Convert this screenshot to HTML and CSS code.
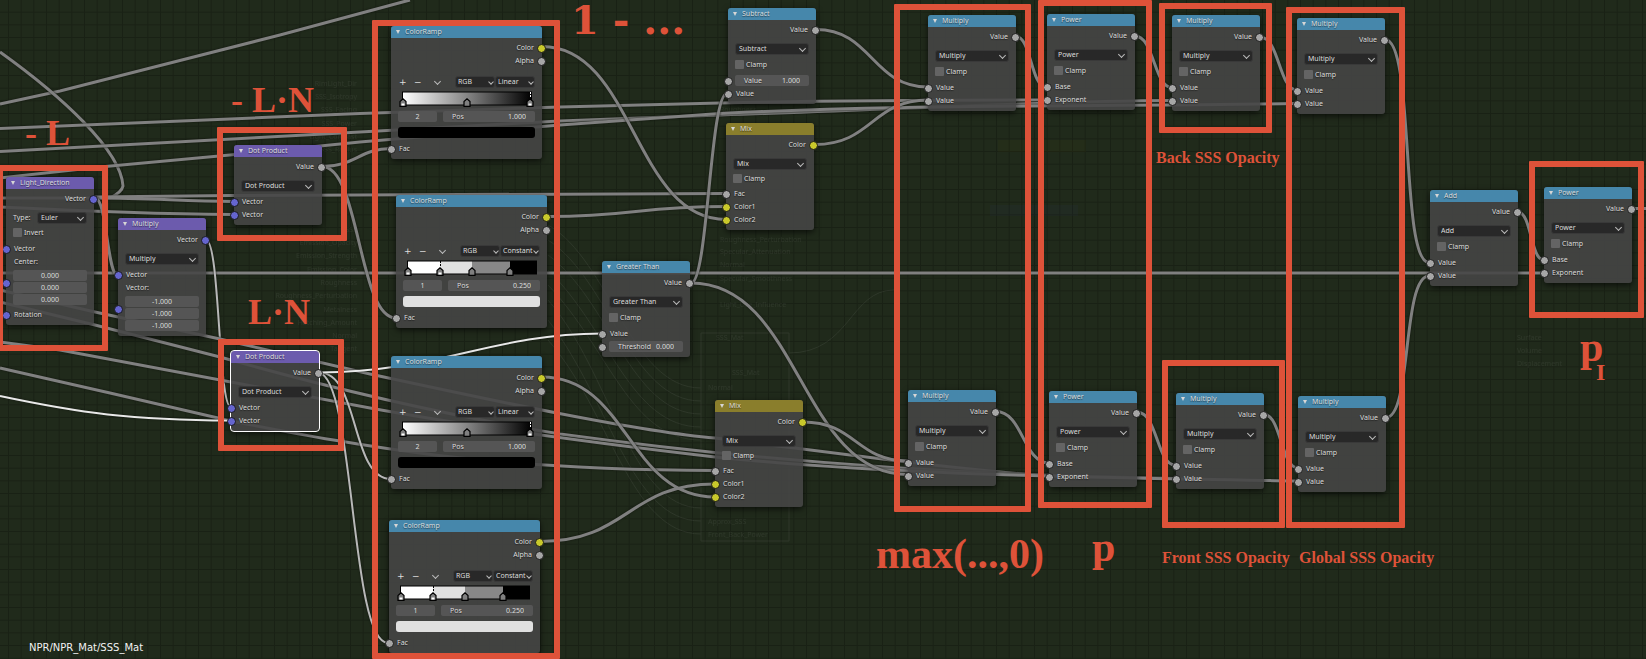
FILE: index.html
```html
<!DOCTYPE html>
<html lang="en">
<head>
<meta charset="utf-8">
<title>NPR/NPR_Mat/SSS_Mat</title>
<link rel="stylesheet" href="styles.css">
</head>
<body>
<main class="canvas">
<svg class="wires" aria-hidden="true">
  <defs>
    <pattern id="grid" x="8" y="11.7" width="12.667" height="12.667" patternUnits="userSpaceOnUse"><path d="M.5 0V13M0 .5H13" class="gridline"/></pattern>
    <linearGradient id="fade"><stop offset="0" stop-color="#fff"/><stop offset=".5" stop-color="#858585"/><stop offset="1" stop-color="#000"/></linearGradient>
    <symbol id="pin" viewBox="0 0 8 9"><path d="M1 8.3V3.6L4 .8 7 3.6V8.3Z" fill="#808080" stroke="#000" stroke-width="1.2"/></symbol>
    <symbol id="pinlight" viewBox="0 0 8 9"><path d="M1 8.3V3.6L4 .8 7 3.6V8.3Z" fill="#808080" stroke="#000" stroke-width="1.2"/><path d="M2.5 5.5h3v2h-3z" fill="#fff"/></symbol>
    <symbol id="smooth" viewBox="0 0 137 17"><rect x="3.5" y="1" width="129" height="13" fill="url(#fade)" stroke="#000"/><path d="M131.500 1v6" stroke="#fff" stroke-dasharray="2 1"/><use href="#pinlight" x="0" y="7" width="8" height="9"/><use href="#pin" x="64" y="7" width="8" height="9"/><use href="#pinlight" x="127" y="7" width="8" height="9"/></symbol>
    <symbol id="steps" viewBox="0 0 137 17"><rect x="3.500" y="1" width="129" height="13" fill="#000" stroke="#000"/><path fill="#fff" d="M4 1.500h32v12H4z"/><path fill="#e0e0e0" d="M36 1.500h32v12H36z"/><path fill="#888" d="M68 1.500h38v12H68z"/><path d="M36.500 1v6" stroke="#000" stroke-dasharray="2 1"/><use href="#pinlight" x="0" y="7" width="8" height="9"/><use href="#pinlight" x="32" y="7" width="8" height="9"/><use href="#pin" x="64" y="7" width="8" height="9"/><use href="#pin" x="102" y="7" width="8" height="9"/></symbol>
  </defs>
  <rect width="100%" height="100%" fill="url(#grid)"/>
  <g class="ghost">
    <g text-anchor="end">
      <text x="357" y="86">RimLight_Dir</text><text x="357" y="99">SSS_Isotropy</text><text x="357" y="112">SSS_Facing</text><text x="357" y="126">SSS_Power</text><text x="357" y="139">Light_Contrast</text><text x="357" y="152">SSS_Radius</text><text x="357" y="232">SSS</text><text x="357" y="245">Emission_Opacity</text><text x="357" y="258">Emission_Strength</text><text x="357" y="272">Emission_Color</text><text x="357" y="285">Roughness</text><text x="357" y="298">Roughness_Perturbation</text><text x="357" y="312">Metalness</text><text x="357" y="325">Hatching_Amount</text><text x="357" y="338">Normal</text><text x="357" y="351">Tangent</text>
    </g>
    <text x="720" y="112">Roughness</text><text x="720" y="242">Roughness_Perturbation</text><text x="720" y="254">Specular_Attenuation</text><text x="720" y="267">Normal</text><text x="720" y="281">Specular_Smoothness</text><text x="720" y="307">Light_Use_Influence</text><text x="716" y="340">SSS_Mat</text><text x="732" y="375">SSS_Mat</text><text x="708" y="390">Normal</text><text x="708" y="524">Approx_SSS</text><text x="708" y="537">Front_Back_Power</text>
    <text x="1517" y="340">Surface</text><text x="1517" y="353">Volume</text><text x="1517" y="366">Displacement</text>
    <path d="M701 333h88v208h-88zM789 353C850 353 850 290 894 290M548 225C610 260 630 388 701 388M548 240C610 280 630 401 701 401M548 255C610 300 630 414 701 414M548 270C610 330 630 427 701 427M548 285C610 350 630 440 701 440M548 300C610 370 630 508 701 508M548 320C610 400 630 521 701 521M548 340C610 410 630 534 701 534"/>
    <path class="ghost-gold" d="M998 140h88v12h-88z"/><path class="ghost-blue" d="M990 205h88v11h-88z"/>
  </g>
  <g class="links">
    <path d="M0 104L60 91 280 35 410 0"/>
    <path d="M0 52C60 95 121 150 123 186C122 192 114 196 110 198"/>
    <path d="M0 128.500L360 113.500 560 107 720 103C850 100 960 100 1046 100"/>
    <path d="M0 151.500L360 132 560 121 720 115C900 109 1050 101 1172 100.500"/>
    <path d="M0 178L100 167 230 155 360 142 560 125 720 113.500C900 104 1100 107 1297 103.500"/>
    <path d="M0 198L95 198M95 197L230 195.500 726 193.500M95 198C150 198 180 201 233 201.500M0 207C100 212 160 214 233 214.500"/>
    <path d="M0 273H1543"/>
    <path d="M95 198C107 198 107 276 118 276"/>
    <path class="lit-soft" d="M206 240C220 240 218 407 231 407"/>
    <path d="M0 290L95 312 220 339 370 374C490 400 640 432 715 438C860 456 960 470 1049 476"/>
    <path d="M0 302L95 325 220 357C330 388 450 416 560 434C750 460 950 476 1176 478.500"/>
    <path d="M0 342L60 350 231 382 370 408C490 430 620 446 715 457C900 476 1100 477 1298 481"/>
    <path d="M0 368L110 393 231 421C370 448 490 470 715 470.500"/>
    <path class="lit" d="M0 396C80 413 130 420 231 420.500"/>
    <path class="lit-soft" d="M319 372.500C360 372 350 479 391 479"/>
    <path class="lit-soft" d="M319 372.500C355 380 350 643 388 643"/>
    <path class="lit" d="M319 372.500C440 372 490 334 602 333.500"/>
    <path d="M322 166.500C355 166.500 360 148.500 391 148.500M322 166.500C360 166.500 358 318 396 318"/>
    <path d="M542 46.500C634 46.500 634 219.500 726 219.500M547 216.500C636 216.500 636 206.500 726 206.500"/>
    <path d="M542 377C628 377 628 497 715 497M540 541.500C628 541.500 628 484 715 484"/>
    <path d="M691 283C708 283 710 93.500 727 93.500M691 283C800 283 800 474.500 908 474.500"/>
    <path d="M816 29.500C872 29.500 872 87 928 87M815 144.500C872 144.500 872 100 928 100"/>
    <path d="M1016 36.500C1031 36.500 1031 87 1046 87M1135 36C1154 36 1154 87.500 1172 87.500M1261 37.500C1279 37.500 1279 90 1297 90"/>
    <path d="M1385 39.500C1415 39.500 1400 262.500 1429 262.500M1386 417.500C1412 417.500 1402 276 1429 276"/>
    <path d="M1518 212C1531 212 1531 259.500 1543 259.500M1632 208.500H1646"/>
    <path d="M803 422C856 422 856 461 908 461M996 411.500C1023 411.500 1023 463 1049 463M1138 412.500C1157 412.500 1157 465 1175 465M1264 414.500C1281 414.500 1281 468 1298 468"/>
  </g>
</svg>

<section class="node vector light-direction"><h2>Light_Direction</h2>
  <div class="row out blue">Vector</div>
  <div class="type"><label for="rot-type">Type:</label><span class="pick"><select id="rot-type"><option>Euler</option></select></span></div>
  <label class="check"><input type="checkbox">Invert</label>
  <div class="row in blue">Vector</div>
  <div class="row">Center:</div>
  <div class="stack in blue"><input aria-label="Center X" value="0.000"><input aria-label="Center Y" value="0.000"><input aria-label="Center Z" value="0.000"></div>
  <div class="row in blue">Rotation</div>
</section>

<section class="node vector vec-multiply"><h2>Multiply</h2>
  <div class="row out blue">Vector</div>
  <span class="pick"><select aria-label="Operation"><option>Multiply</option></select></span>
  <div class="row in blue">Vector</div>
  <div class="row">Vector:</div>
  <div class="stack in blue"><input aria-label="Vector X" value="-1.000"><input aria-label="Vector Y" value="-1.000"><input aria-label="Vector Z" value="-1.000"></div>
</section>

<section class="node vector dot-back"><h2>Dot Product</h2>
  <div class="row out">Value</div>
  <span class="pick"><select aria-label="Operation"><option>Dot Product</option></select></span>
  <div class="row in blue">Vector</div><div class="row in blue">Vector</div>
</section>

<section class="node vector dot-front selected"><h2>Dot Product</h2>
  <div class="row out">Value</div>
  <span class="pick"><select aria-label="Operation"><option>Dot Product</option></select></span>
  <div class="row in blue">Vector</div><div class="row in blue">Vector</div>
</section>

<section class="node ramp ramp-a"><h2>ColorRamp</h2>
  <div class="row out yellow">Color</div><div class="row out">Alpha</div>
  <div class="tools"><button aria-label="Add stop">+</button><button aria-label="Remove stop">−</button><button class="more" aria-label="More"></button><span class="pick"><select aria-label="Color mode"><option>RGB</option></select></span><span class="pick"><select aria-label="Interpolation"><option>Linear</option></select></span></div>
  <svg class="bar"><use href="#smooth"/></svg>
  <div class="stop"><input aria-label="Stop index" value="2"><label class="field">Pos<input value="1.000"></label></div>
  <button class="swatch black" aria-label="Stop color"></button>
  <div class="row in">Fac</div>
</section>

<section class="node ramp ramp-b"><h2>ColorRamp</h2>
  <div class="row out yellow">Color</div><div class="row out">Alpha</div>
  <div class="tools"><button aria-label="Add stop">+</button><button aria-label="Remove stop">−</button><button class="more" aria-label="More"></button><span class="pick"><select aria-label="Color mode"><option>RGB</option></select></span><span class="pick"><select aria-label="Interpolation"><option>Constant</option></select></span></div>
  <svg class="bar"><use href="#steps"/></svg>
  <div class="stop"><input aria-label="Stop index" value="1"><label class="field">Pos<input value="0.250"></label></div>
  <button class="swatch" aria-label="Stop color"></button>
  <div class="row in">Fac</div>
</section>

<section class="node ramp ramp-c"><h2>ColorRamp</h2>
  <div class="row out yellow">Color</div><div class="row out">Alpha</div>
  <div class="tools"><button aria-label="Add stop">+</button><button aria-label="Remove stop">−</button><button class="more" aria-label="More"></button><span class="pick"><select aria-label="Color mode"><option>RGB</option></select></span><span class="pick"><select aria-label="Interpolation"><option>Linear</option></select></span></div>
  <svg class="bar"><use href="#smooth"/></svg>
  <div class="stop"><input aria-label="Stop index" value="2"><label class="field">Pos<input value="1.000"></label></div>
  <button class="swatch black" aria-label="Stop color"></button>
  <div class="row in">Fac</div>
</section>

<section class="node ramp ramp-d"><h2>ColorRamp</h2>
  <div class="row out yellow">Color</div><div class="row out">Alpha</div>
  <div class="tools"><button aria-label="Add stop">+</button><button aria-label="Remove stop">−</button><button class="more" aria-label="More"></button><span class="pick"><select aria-label="Color mode"><option>RGB</option></select></span><span class="pick"><select aria-label="Interpolation"><option>Constant</option></select></span></div>
  <svg class="bar"><use href="#steps"/></svg>
  <div class="stop"><input aria-label="Stop index" value="1"><label class="field">Pos<input value="0.250"></label></div>
  <button class="swatch" aria-label="Stop color"></button>
  <div class="row in">Fac</div>
</section>

<section class="node subtract"><h2>Subtract</h2>
  <div class="row out">Value</div>
  <span class="pick"><select aria-label="Operation"><option>Subtract</option></select></span>
  <label class="check"><input type="checkbox">Clamp</label>
  <div class="row in"><label class="field">Value<input value="1.000"></label></div><div class="row in">Value</div>
</section>

<section class="node greater"><h2>Greater Than</h2>
  <div class="row out">Value</div>
  <span class="pick"><select aria-label="Operation"><option>Greater Than</option></select></span>
  <label class="check"><input type="checkbox">Clamp</label>
  <div class="row in">Value</div><div class="row in"><label class="field">Threshold<input value="0.000"></label></div>
</section>

<section class="node mix mix-back"><h2>Mix</h2>
  <div class="row out yellow">Color</div>
  <span class="pick"><select aria-label="Blend mode"><option>Mix</option></select></span>
  <label class="check"><input type="checkbox">Clamp</label>
  <div class="row in">Fac</div><div class="row in yellow">Color1</div><div class="row in yellow">Color2</div>
</section>

<section class="node mix mix-front"><h2>Mix</h2>
  <div class="row out yellow">Color</div>
  <span class="pick"><select aria-label="Blend mode"><option>Mix</option></select></span>
  <label class="check"><input type="checkbox">Clamp</label>
  <div class="row in">Fac</div><div class="row in yellow">Color1</div><div class="row in yellow">Color2</div>
</section>

<section class="node back-max"><h2>Multiply</h2>
  <div class="row out">Value</div>
  <span class="pick"><select aria-label="Operation"><option>Multiply</option></select></span>
  <label class="check"><input type="checkbox">Clamp</label>
  <div class="row in">Value</div><div class="row in">Value</div>
</section>

<section class="node back-power"><h2>Power</h2>
  <div class="row out">Value</div>
  <span class="pick"><select aria-label="Operation"><option>Power</option></select></span>
  <label class="check"><input type="checkbox">Clamp</label>
  <div class="row in">Base</div><div class="row in">Exponent</div>
</section>

<section class="node back-opacity"><h2>Multiply</h2>
  <div class="row out">Value</div>
  <span class="pick"><select aria-label="Operation"><option>Multiply</option></select></span>
  <label class="check"><input type="checkbox">Clamp</label>
  <div class="row in">Value</div><div class="row in">Value</div>
</section>

<section class="node back-global"><h2>Multiply</h2>
  <div class="row out">Value</div>
  <span class="pick"><select aria-label="Operation"><option>Multiply</option></select></span>
  <label class="check"><input type="checkbox">Clamp</label>
  <div class="row in">Value</div><div class="row in">Value</div>
</section>

<section class="node front-max"><h2>Multiply</h2>
  <div class="row out">Value</div>
  <span class="pick"><select aria-label="Operation"><option>Multiply</option></select></span>
  <label class="check"><input type="checkbox">Clamp</label>
  <div class="row in">Value</div><div class="row in">Value</div>
</section>

<section class="node front-power"><h2>Power</h2>
  <div class="row out">Value</div>
  <span class="pick"><select aria-label="Operation"><option>Power</option></select></span>
  <label class="check"><input type="checkbox">Clamp</label>
  <div class="row in">Base</div><div class="row in">Exponent</div>
</section>

<section class="node front-opacity"><h2>Multiply</h2>
  <div class="row out">Value</div>
  <span class="pick"><select aria-label="Operation"><option>Multiply</option></select></span>
  <label class="check"><input type="checkbox">Clamp</label>
  <div class="row in">Value</div><div class="row in">Value</div>
</section>

<section class="node front-global"><h2>Multiply</h2>
  <div class="row out">Value</div>
  <span class="pick"><select aria-label="Operation"><option>Multiply</option></select></span>
  <label class="check"><input type="checkbox">Clamp</label>
  <div class="row in">Value</div><div class="row in">Value</div>
</section>

<section class="node add"><h2>Add</h2>
  <div class="row out">Value</div>
  <span class="pick"><select aria-label="Operation"><option>Add</option></select></span>
  <label class="check"><input type="checkbox">Clamp</label>
  <div class="row in">Value</div><div class="row in">Value</div>
</section>

<section class="node final-power"><h2>Power</h2>
  <div class="row out">Value</div>
  <span class="pick"><select aria-label="Operation"><option>Power</option></select></span>
  <label class="check"><input type="checkbox">Clamp</label>
  <div class="row in">Base</div><div class="row in">Exponent</div>
</section>

<div class="frame f-light"></div><div class="frame f-dot-back"></div><div class="frame f-dot-front"></div><div class="frame f-ramps"></div><div class="frame f-max"></div><div class="frame f-power"></div><div class="frame f-back"></div><div class="frame f-front"></div><div class="frame f-global"></div><div class="frame f-final"></div>

<p class="note n-l">- L</p>
<p class="note n-back-ln">- L·N</p>
<p class="note n-front-ln">L·N</p>
<p class="note n-one">1 - ...</p>
<p class="note big n-max">max(...,0)</p>
<p class="note big n-p">p</p>
<p class="note small n-back">Back SSS Opacity</p>
<p class="note small n-front">Front SSS Opacity</p>
<p class="note small n-global">Global SSS Opacity</p>
<p class="note big n-pi">p</p>
<p class="note sub n-i">I</p>
<p class="path">NPR/NPR_Mat/SSS_Mat</p>
</main>
</body>
</html>
```

FILE: styles.css
```css
* { box-sizing: border-box; }
body { margin: 0; background: #202a1b; }
.canvas {
  position: relative;
  min-height: 100vh;
  overflow: hidden;
  background: #202a1b;
  color: #dcdcdc;
  font: 7px/13px "Noto Sans", "DejaVu Sans", sans-serif;
}

/* Wires and background grid */
.wires { position: absolute; inset: 0; width: 100%; height: 100%; }
.gridline { fill: none; stroke: #192115; stroke-width: 1; }
.links path { fill: none; stroke: #808080; stroke-width: 3; filter: drop-shadow(0 0 1px #10150d); }
.links .lit { stroke: #e8e8e8; stroke-width: 2; }
.links .lit-soft { stroke: #b8b8b8; stroke-width: 2; }
.ghost { opacity: .06; fill: #fff; font-size: 7px; }
.ghost path { fill: none; stroke: #fff; }
.ghost .ghost-gold { fill: #6a6000; stroke: none; }
.ghost .ghost-blue { fill: #304090; stroke: none; }

/* Nodes */
.node {
  position: absolute;
  display: flex;
  flex-direction: column;
  width: 88px;
  padding-bottom: 4px;
  border-radius: 3px;
  background: #454545e4;
  box-shadow: 0 2px 6px #000a;
  text-shadow: 0 1px 1px #0008;
}
.node h2 {
  display: flex;
  align-items: center;
  gap: 5px;
  height: 12px;
  margin: 0 0 3px;
  padding: 0 0 1px 5px;
  border-radius: 3px 3px 0 0;
  background: #4687ab;
  font: inherit;
}
.node h2::before { content: ""; border: 2px solid transparent; border-top: 4px solid #d6d6d6; border-bottom: 0; }
.vector h2 { background: #6c5bad; }
.mix h2 { background: #8a7e2c; }
.selected { outline: 1px solid #fff; }

.row { position: relative; height: 13px; padding: 0 8px; }
.out { text-align: right; }
.out::after, .in::before {
  content: "";
  position: absolute;
  top: 3px;
  width: 7px;
  height: 7px;
  border: 1px solid #1a1a1a;
  border-radius: 50%;
  background: #a6a6a6;
}
.out::after { right: -4px; }
.in::before { left: -4px; }
.blue::after, .blue::before { background: #6565cf; }
.yellow::after, .yellow::before { background: #c9c92b; }
.stack.in::before { top: 9px; }

.pick { position: relative; display: block; height: 12px; margin: 7px 7px 3px; }
.pick::after {
  content: "";
  position: absolute;
  right: 4px;
  top: 3px;
  width: 4px;
  height: 4px;
  border: solid #bbb;
  border-width: 0 1px 1px 0;
  transform: rotate(45deg);
}
select {
  display: block;
  appearance: none;
  width: 100%;
  height: 100%;
  padding: 0 3px;
  border: 1px solid #393939;
  border-radius: 3px;
  background: #282828;
  color: inherit;
  font: inherit;
  line-height: 10px;
}
.mix .pick, .mix .check { margin-bottom: 2px; }
.check { display: flex; align-items: center; gap: 2px; height: 13px; margin: 0 7px 3px; }
.check input { appearance: none; width: 9px; height: 9px; margin: 0; border-radius: 1px; background: #646464; }

input:not([type]), .field { height: 11px; border: 0; border-radius: 2px; background: #555; color: inherit; font: inherit; line-height: 11px; }
input:not([type]) { min-width: 0; padding: 0; text-align: center; }
.row .field { margin: 1px 0; }
.row:has(.field) { padding: 0 7px; }
.field { display: flex; justify-content: space-between; padding: 0 9px; }
.field input:not([type]) { width: 24px; background: none; text-align: right; }
.stack { position: relative; display: flex; flex-direction: column; gap: 1px; margin: 2px 0 1px; padding: 0 7px; }
.type { display: flex; align-items: center; justify-content: space-between; margin: 6px 7px 2px; }
.type .pick { width: 50px; margin: 0; }
.light-direction .check { margin-bottom: 3px; }
.light-direction .stack { margin-bottom: 3px; }

/* Color ramps */
.ramp { width: 151px; }
.ramp .row + .tools { margin-top: 9px; }
.tools { display: flex; align-items: center; height: 12px; padding: 0 7px 0 8px; }
.tools button { width: 15px; height: 12px; padding: 0; border: 0; background: none; color: #ddd; font: 9px/12px "DejaVu Sans", sans-serif; text-align: left; }
.tools .more { width: 26px; }
.tools .more::before { content: ""; display: block; width: 4px; height: 4px; margin: 0 0 2px 6px; border: solid #bbb; border-width: 0 1px 1px 0; transform: rotate(45deg); }
.tools .pick { flex: 1; min-width: 0; margin: 0; }
.tools select { padding: 0 2px; }
.tools .pick::after { right: 2px; width: 3px; height: 3px; top: 4px; }
.bar { width: 137px; height: 17px; margin: 3px 0 3px 8px; }
.stop { display: flex; gap: 6px; padding: 0 7px; }
.stop > input:not([type]) { width: 39px; }
.stop .field { flex: 1; }
.swatch { height: 11px; margin: 5px 7px 4px; padding: 0; border: 0; border-radius: 3px; background: #e0e0e0; }
.black { background: #000; }

/* Node places on the canvas */
.light-direction { left: 6px; top: 177px; }
.vec-multiply { left: 118px; top: 218px; }
.dot-back { left: 234px; top: 145px; }
.dot-front { left: 231px; top: 351px; }
.ramp-a { left: 391px; top: 26px; }
.ramp-b { left: 396px; top: 195px; }
.ramp-c { left: 391px; top: 356px; }
.ramp-d { left: 389px; top: 520px; }
.subtract { left: 728px; top: 8px; }
.greater { left: 602px; top: 261px; }
.mix-back { left: 726px; top: 123px; }
.mix-front { left: 715px; top: 400px; }
.back-max { left: 928px; top: 15px; }
.back-power { left: 1047px; top: 14px; }
.back-opacity { left: 1172px; top: 15px; }
.back-global { left: 1297px; top: 18px; }
.front-max { left: 908px; top: 390px; }
.front-power { left: 1049px; top: 391px; }
.front-opacity { left: 1176px; top: 393px; }
.front-global { left: 1298px; top: 396px; }
.add { left: 1430px; top: 190px; }
.final-power { left: 1544px; top: 187px; }

/* Annotation frames */
.frame { position: absolute; border: 6px solid #de5239; border-radius: 1px; pointer-events: none; }
.f-light { left: -3px; top: 165px; width: 111px; height: 186px; }
.f-dot-back { left: 217px; top: 127px; width: 130px; height: 114px; }
.f-dot-front { left: 218px; top: 339px; width: 126px; height: 112px; }
.f-ramps { left: 372px; top: 20px; width: 188px; height: 639px; }
.f-max { left: 894px; top: 4px; width: 137px; height: 508px; }
.f-power { left: 1038px; top: 0; width: 114px; height: 508px; }
.f-back { left: 1159px; top: 3px; width: 113px; height: 130px; }
.f-front { left: 1162px; top: 360px; width: 123px; height: 168px; }
.f-global { left: 1286px; top: 7px; width: 119px; height: 521px; }
.f-final { left: 1529px; top: 161px; width: 115px; height: 157px; }

/* Annotation text */
.note { position: absolute; margin: 0; color: #de5239; text-shadow: none; font: bold 36px/40px "Liberation Serif", serif; white-space: nowrap; }
.big { font-size: 42px; line-height: 48px; }
.small { font-size: 16px; line-height: 20px; }
.sub { font-size: 24px; line-height: 28px; }
.n-l { left: 25px; top: 113px; }
.n-back-ln { left: 231px; top: 80px; }
.n-front-ln { left: 248px; top: 292px; }
.n-one { left: 571px; top: 0; font: bold 40px/40px "DejaVu Serif", serif; }
.n-max { left: 876px; top: 530px; }
.n-p { left: 1092px; top: 523px; }
.n-back { left: 1156px; top: 148px; }
.n-front { left: 1162px; top: 548px; }
.n-global { left: 1299px; top: 548px; }
.n-pi { left: 1580px; top: 323px; }
.n-i { left: 1596px; top: 358px; }
.path { position: absolute; left: 29px; bottom: 4px; margin: 0; color: #f2f2f2; font: 10px/14px "DejaVu Sans", sans-serif; }
```
